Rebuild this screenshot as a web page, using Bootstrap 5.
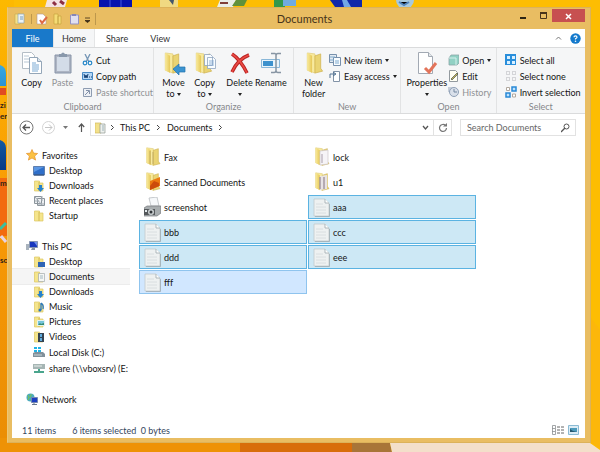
<!DOCTYPE html>
<html lang="en">
<head>
<meta charset="utf-8">
<meta name="viewport" content="width=device-width, initial-scale=1">
<title>Documents</title>
<link href="https://cdn.jsdelivr.net/npm/bootstrap@5.3.0/dist/css/bootstrap.min.css" rel="stylesheet">
<style>
body{font-family:Lato,"Open Sans",sans-serif;font-size:9px;line-height:11px;color:#141414;background:#fbb900;padding:7px 9px 9px 7px}
button{font:inherit;color:inherit;background:none;border:0;padding:0;white-space:nowrap}
svg{display:block;flex:none}
.wallpaper{position:absolute;left:0;top:0;width:100%;height:100%;z-index:-1}
.win{background:#e9bd62;border:1px solid #dcb25a;border-left-color:#edc777;padding:0 5px 4px 4px}
.titlebar{height:21px}
.titlebar h1{font-size:11px;line-height:20px;color:#46331a;font-weight:400}
.quick{width:180px;padding-left:2px}
.controls{width:168px}
.controls button{height:13px;width:20px;margin-bottom:7px}
.controls .closer{background:#c75050;width:33px}
.tabs button{height:18px;padding:0 11px;color:#333}
.tabs .file-tab{background:#1979ca;color:#fff;width:41px;padding:0}
.tabs .active{background:#f5f6f7;border:1px solid #e4e5e6;border-width:0 1px;padding:0;width:42px}
.ribbon{background:#f5f6f7;border:1px solid #dadbdc;border-width:1px 0;height:67px}
.group{border-right:1px solid #e2e3e4;padding-top:4px;min-width:0}
.group:last-child{border-right:0}
.group h2{font-size:9px;line-height:12px;color:#85878b;font-weight:400;text-align:center}
.g1{flex:142 1 0}.g2{flex:140 1 0}.g3{flex:107 1 0}.g4{flex:95 1 0}.g5{flex:89 1 0}
.big{width:31px;line-height:11px}
.big svg{margin:0 auto 1px}
.big.wide{width:43px}
.small-cmds button{height:16px;gap:3px}
.off{color:#8f9194}
.caret{display:inline-block;border:solid transparent;border-width:3px 2px 0;border-top-color:#222;vertical-align:middle}
.crumbs{border:1px solid #e2e2e2;height:17px}
.address{height:27px;padding:0 9px 0 7px}
.up-btn{padding:0 5px 0 10px}
.refresh{border-left:1px solid #e2e2e2;width:18px;height:15px}
.finder{border:1px solid #e2e2e2;width:116px;height:17px}
.finder input{font:inherit;color:#555;border:0;background:none;width:98px;padding:0 0 0 6px;outline:0}
.finder input::placeholder{color:#666;opacity:1}
.tree{width:118px;padding-top:6px;overflow:hidden}
.tree li{height:15px;padding-left:21px;gap:4px;white-space:nowrap}
.tree li.root{height:16px;padding-left:14px}
.tree li.drive{height:16px}
.tree li.current{background:#f5f5f5;box-shadow:0 0 0 1px #ececec}
.tree ul+ul{margin-top:15px}
.files{display:grid;grid-template-columns:168px 168px;grid-auto-rows:24px;gap:1px;padding:4px 0 0 9px}
.files button{border:1px solid transparent;gap:3px;padding-left:4px;text-align:left}
.files .sel{background:#cde8f5;border-color:#5bb3e2}
.files .focus{background:#d1e7ff;border-color:#8fc4ee}
.status{height:16px;padding:0 6px 0 10px;color:#35465c}
</style>
</head>
<body class="min-vh-100 d-flex flex-column">
<svg width="0" height="0" class="position-absolute" aria-hidden="true">
<defs>
<linearGradient id="gold" x1="0" x2="1"><stop offset="0" stop-color="#f9ea9c"/><stop offset="1" stop-color="#e6c858"/></linearGradient>
<linearGradient id="sea" x1="0" y1="0" x2="0" y2="1"><stop offset="0" stop-color="#35a8e5"/><stop offset="1" stop-color="#073a86"/></linearGradient>
<linearGradient id="wall" x1="0" y1="0" x2="0" y2="1"><stop offset="0" stop-color="#fdb900"/><stop offset=".45" stop-color="#f99a05"/><stop offset="1" stop-color="#ea8d05"/></linearGradient>
</defs>
<symbol id="folder" viewBox="0 0 20 24"><path d="M3 1l8 1v20l-8-3z" fill="#f8ea9e" stroke="#dfca72" stroke-width=".7"/><path d="M11 4l6-2v15l2 3-8 2z" fill="#ead473" stroke="#ccae4b" stroke-width=".7"/><path d="M3 1l5 3v18l-5-3z" fill="url(#gold)"/></symbol>
<symbol id="mini" viewBox="0 0 12 12"><path d="M1.500 1h5v2h3.500v8h-8.500z" fill="#f5e58c" stroke="#dcc662" stroke-width=".7"/><path d="M6 2v9" stroke="#d3bb55"/></symbol>
<symbol id="page" viewBox="0 0 17 19"><path d="M1 1h11l4 4v13h-15z" fill="#eef1f1" stroke="#c2cacd" stroke-width=".8"/><path d="M12 1v4h4" fill="#fff" stroke="#9da8ad" stroke-width=".8"/><path d="M3 6h7M3 9h10M3 12h10M3 15h10" stroke="#d3dadd" stroke-width=".8"/><path d="M2 18.500h14.500V6" fill="none" stroke="#9aa5aa" stroke-width=".7"/></symbol>
<symbol id="screen" viewBox="0 0 12 10"><path d="M.5.5h11v8.500H.5z" fill="#2f6fc9" stroke="#5f7fae"/><path d="M1 1h10L1 6z" fill="#5b97e4"/><path d="M1 9h10" stroke="#27446f"/></symbol>
</svg>

<svg class="wallpaper" viewBox="0 0 600 452" preserveAspectRatio="none" aria-hidden="true">
<path fill="#fdbd02" d="M0 0h600v452H0z"/>
<path fill="url(#wall)" d="M0 0h14v452H0z"/>
<path fill="#ee9206" d="M0 438h300v14H0z"/><path fill="#d86d0a" d="M240 443h112v9H240z"/><path fill="#a87538" d="M352 443h38l2 9h-40z"/><path fill="#f3dfca" d="M390 443h200l10 7v2H392z"/>
<path fill="#fba81e" d="M585 438l15 11V330l-15-20z" opacity=".3"/>
<path fill="#f4e3e2" d="M47 0h20l-2 7H45z"/><path stroke="#8d3043" stroke-width="3" d="M53 2l3 3M60 1l4 3"/>
<path fill="#0712ae" d="M99 0h33v7H99z"/><path stroke="#4256df" d="M110 0v7M121 0v7"/>
<path fill="#f0d982" d="M160 0h18v7h-18z"/><path fill="#44566b" d="M169 0h5l-1 5z"/>
<path fill="#e9eee8" d="M220 0h16l-3 7h-16z"/><path fill="#60913b" d="M236 0h11l-3 6h-12z"/><path stroke="#803f38" stroke-width="2" d="M220 3h8"/>
<path fill="#34984b" d="M274 0h11v7h-11z"/><path fill="#71abe0" d="M283 0h13v6h-13z"/>
<path fill="#1028a9" d="M330 0h32v7h-27z"/><path fill="#73a8e7" d="M342 0h5l4 7h-7z"/>
<circle cx="405" cy="0" r="9" fill="#a7c9de"/><path stroke="#5085bd" stroke-width="2" d="M399 2l5 3 5-3"/>
<path fill="url(#sea)" d="M0 65q6 2 6 8v13H0zM0 140q6 2 6 8v22H0z"/><path fill="#e14b21" d="M0 88h6v7H0z"/><path fill="#f26a0e" d="M0 178h7v58H0z"/>
<path stroke="#38c1a1" stroke-width="3" d="M0 229l6-6"/><path stroke="#e8d3e4" stroke-width="3" d="M1 236l5 6"/>
<g font-size="8" font-weight="700" fill="#302116"><text x="0" y="108">zi</text><text x="0" y="119">er</text><text x="0" y="186">m</text><text x="0" y="263">so</text></g>
</svg>

<main class="win flex-grow-1 d-flex flex-column">
<header class="titlebar d-flex align-items-center justify-content-between">
<div class="quick d-flex align-items-center">
<svg width="68" height="14" viewBox="0 0 68 14"><path d="M1 2h5v10H1z" fill="#f4e28b" stroke="#c9ae55" stroke-width=".7"/><path d="M4 2h6v9H4z" fill="#edf3f5" stroke="#8ea4b3" stroke-width=".7"/><path d="M6 5h3M6 7h3" stroke="#5788b2" stroke-width=".8"/><path d="M17.500 2v10" stroke="#bd984c"/><path d="M23 2h6l3 3v7h-9z" fill="#fff" stroke="#b4998e" stroke-width=".6"/><path d="M26 8l2 3 5-6" fill="none" stroke="#dd6a46" stroke-width="2"/><path d="M40 2h4v2h3v8h-7z" fill="#f5dc75" stroke="#c8a441" stroke-width=".7"/><path d="M44 4v8" stroke="#b89838"/><path d="M56.500 3h8v9h-8z" fill="#e1e0f0" stroke="#9491c1"/><path d="M58 2h4v2h-4z" fill="#8686b5"/></svg>
<svg width="18" height="14" viewBox="0 0 18 14"><path d="M3 6h5M3 8.500h5l-2.500 2z" stroke="#382a15" fill="#382a15" stroke-width=".8"/><path d="M13.500 1v12" stroke="#bd984c"/></svg>
</div>
<h1 class="m-0">Documents</h1>
<div class="controls d-flex justify-content-end">
<button aria-label="Minimize"><svg width="20" height="13"><path d="M8 9h6" stroke="#2d2515" stroke-width="2"/></svg></button>
<button aria-label="Maximize"><svg width="20" height="13"><path d="M8.500 4.500h6v5h-6z" fill="none" stroke="#4a351a"/><path d="M8 4h7" stroke="#4a351a" stroke-width="2"/></svg></button>
<button class="closer" aria-label="Close"><svg width="33" height="13"><path d="M14 5l5 5m0-5l-5 5" stroke="#fff" stroke-width="1.500"/></svg></button>
</div>
</header>

<div class="bg-white flex-grow-1 d-flex flex-column">
<nav class="tabs d-flex align-items-center" aria-label="Ribbon tabs">
<button class="file-tab">File</button><button class="active">Home</button><button>Share</button><button>View</button>
<button class="ms-auto p-0 me-2" aria-label="Collapse ribbon"><svg width="7" height="6"><path d="M1 4.500L3.500 2 6 4.500" fill="none" stroke="#777"/></svg></button>
<button class="p-0 me-1" aria-label="Help"><svg width="11" height="11" viewBox="0 0 11 11"><circle cx="5.500" cy="5.500" r="5.200" fill="#1379cc"/><path d="M4 4.200Q4 2.800 5.500 2.800T7 4.200Q7 5 5.500 5.800V6.500" fill="none" stroke="#fff" stroke-width="1.200"/><circle cx="5.500" cy="8.300" r=".8" fill="#fff"/></svg></button>
</nav>

<section class="ribbon d-flex" aria-label="Home commands">
<div class="group g1 d-flex flex-column justify-content-between"><div class="d-flex">
<button class="big ms-1 align-self-start"><svg width="24" height="24"><path d="M2.500.5h9l3 3v13h-12z" fill="#fff" stroke="#b5bec6"/><path d="M4 4h5M4 7h6M4 10h6" stroke="#b8c7d4"/><path d="M9.500 5.500h8l4 4v12h-12z" fill="#fff" stroke="#94a6b8"/><path d="M17.500 5.500v4h4" fill="#d9e5ef" stroke="#94a6b8"/><path d="M12 11h4M12 13h7M12 15h7M12 17h7M12 19h6" stroke="#5894c9" stroke-width=".8"/></svg>Copy</button>
<button class="big off align-self-start"><svg width="24" height="24"><path d="M4 3h16v18H4z" fill="#aeb5c3" stroke="#8894a8"/><path d="M6 5h12v14H6z" fill="#d3dce8"/><path d="M8 5V2h2q2-3 4 0h2v3z" fill="#8998ab"/></svg>Paste</button>
<div class="small-cmds d-flex flex-column ms-1">
<button class="d-flex align-items-center"><svg width="11" height="12"><path d="M3 0l4 8M8 0L4 8" stroke="#7495b5" stroke-width="1.300"/><circle cx="3" cy="9" r="1.800" fill="none" stroke="#2587c8" stroke-width="1.200"/><circle cx="8" cy="9" r="1.800" fill="none" stroke="#2587c8" stroke-width="1.200"/></svg>Cut</button>
<button class="d-flex align-items-center"><svg width="11" height="10"><path d="M.5 1.500h10v7H.5z" fill="#b4d6f5" stroke="#4689c5"/><path d="M2 3l1 4 1-3 1 3 1-4M7 6h1M9 6h1" fill="none" stroke="#153f73"/></svg>Copy path</button>
<button class="d-flex align-items-center off"><svg width="11" height="11"><path d="M1.500 1.500h8v8h-8z" fill="#edf0f5" stroke="#8e9cb1"/><path d="M3 8l4-4M4 3.500h3.500V7" fill="none" stroke="#8392a9"/></svg>Paste shortcut</button>
</div></div><h2 class="m-0">Clipboard</h2></div>

<div class="group g2 d-flex flex-column justify-content-between"><div class="d-flex">
<button class="big ms-1 align-self-start"><svg width="24" height="24"><use href="#folder" width="20" height="23"/><path d="M11 17l6-5v3h6v5h-6v3z" fill="#3b94d1" stroke="#2473ad" stroke-width=".7"/></svg>Move<br>to <i class="caret"></i></button>
<button class="big align-self-start"><svg width="24" height="24"><use href="#folder" width="20" height="23"/><path d="M11.500 2.500h6l2 2v9h-8zM14.500 5.500h6l2 2v9h-8z" fill="#f8fcff" stroke="#91a5bf" stroke-width=".8"/><path d="M16 9h5M16 11h5M16 13h5" stroke="#6b98ca" stroke-width=".7"/></svg>Copy<br>to <i class="caret"></i></button>
<button class="big ms-1 align-self-start"><svg width="24" height="24"><path d="M4 2q8 5 15 19M21 3Q10 7 4 20" fill="none" stroke="#b92323" stroke-width="3.500"/><path d="M4 2q8 5 15 19M21 3Q10 7 4 20" fill="none" stroke="#ea4a43" stroke-width="1.500"/></svg>Delete<br><i class="caret"></i></button>
<button class="big align-self-start"><svg width="24" height="24"><path d="M2.500 7.500h18v8h-18z" fill="#e9f4fb" stroke="#89b7d8"/><path d="M4 9h10v5H4z" fill="#3c91cd"/><path d="M12 1.500h4q1 0 1 2v15q0 2-2 2h-3M22 1.500h-3q-2 0-2 2v15q0 2 2 2h3" fill="none" stroke="#8795a3" stroke-width="1.500"/></svg>Rename</button>
</div><h2 class="m-0">Organize</h2></div>

<div class="group g3 d-flex flex-column justify-content-between"><div class="d-flex">
<button class="big ms-1 align-self-start"><svg width="24" height="24"><use href="#folder" x="2" width="20" height="23"/></svg>New<br>folder</button>
<div class="small-cmds">
<button class="d-flex align-items-center"><svg width="12" height="12"><path d="M.5.5h7v8h-7z" fill="#e4ebf2" stroke="#7790ac"/><path d="M4.500 3.500h7v8h-7z" fill="#f8fcff" stroke="#7790ac"/><path d="M1 3h5M1 6h4M6 7h4M6 9h4" stroke="#7faace"/></svg>New item <i class="caret"></i></button>
<button class="d-flex align-items-center"><svg width="12" height="12"><path d="M4.500 1.500h6v10h-6z" fill="#fff" stroke="#8293a7"/><path d="M1 8V4h5M4 2l3 2-3 2" fill="none" stroke="#547493"/></svg>Easy access <i class="caret"></i></button>
</div></div><h2 class="m-0">New</h2></div>

<div class="group g4 d-flex flex-column justify-content-between"><div class="d-flex">
<button class="big wide ms-1 align-self-start"><svg width="24" height="24"><path d="M3.500.5h10l4 4v17h-14z" fill="#fff" stroke="#a2a9b3"/><path d="M13.500.5v4h4" fill="#e5e9ec" stroke="#a2a9b3"/><path d="M10 16l4 4 7-9" fill="none" stroke="#e3745a" stroke-width="3"/></svg>Properties<br><i class="caret"></i></button>
<div class="small-cmds">
<button class="d-flex align-items-center"><svg width="11" height="12"><path d="M3 1h8v8l-2 2H1V4z" fill="#91d1c4" stroke="#8ba6a7" stroke-width=".8"/><path d="M1 4h7v7" fill="none" stroke="#d6f0ed"/></svg>Open <i class="caret"></i></button>
<button class="d-flex align-items-center"><svg width="11" height="12"><path d="M1.500.5h6l2 2v9h-8z" fill="#fffff4" stroke="#939a9f"/><path d="M3 9l6-6 1 1-6 6z" fill="#c8b459" stroke="#44514e" stroke-width=".7"/></svg>Edit</button>
<button class="d-flex align-items-center off"><svg width="11" height="12"><path d="M0 1h5v5H0z" fill="#c6ced9"/><circle cx="6" cy="6" r="4.500" fill="#d9e0ea" stroke="#8fa0b6"/><path d="M6 3v3h3" fill="none" stroke="#73869f"/></svg>History</button>
</div></div><h2 class="m-0">Open</h2></div>

<div class="group g5 d-flex flex-column justify-content-between"><div class="small-cmds ps-2">
<button class="d-flex align-items-center"><svg width="12" height="12"><path d="M0 0h11v11H0z" fill="#298edb"/><path d="M2 2h3v3H2zM7 2h3v3H7zM2 7h3v3H2zM7 7h3v3H7z" fill="#d9f0ff"/></svg>Select all</button>
<button class="d-flex align-items-center"><svg width="12" height="12"><path d="M1.500 1.500h3v3h-3zM7.500 1.500h3v3h-3zM1.500 7.500h3v3h-3zM7.500 7.500h3v3h-3z" fill="none" stroke="#b2b5b9" stroke-dasharray="1 1"/></svg>Select none</button>
<button class="d-flex align-items-center"><svg width="12" height="12"><path d="M1.500 1.500h3v3h-3zM7.500 8h3v3h-3z" fill="#fff" stroke="#b1a89e"/><path d="M7 1h4v4H7zM1 7h4v4H1z" fill="#bee3ff" stroke="#2989d6" stroke-width="1.500"/></svg>Invert selection</button>
</div><h2 class="m-0">Select</h2></div>
</section>

<div class="address d-flex align-items-center">
<button aria-label="Back"><svg width="15" height="15"><circle cx="7.500" cy="7.500" r="6.500" fill="none" stroke="#777"/><path d="M4 7.500h7M7 4.500l-3 3 3 3" fill="none" stroke="#555" stroke-width="1.300"/></svg></button>
<button class="ms-2" aria-label="Forward"><svg width="13" height="15"><circle cx="6.500" cy="7.500" r="6" fill="none" stroke="#d3d3d3"/><path d="M3 7.500h7M7 4.500l3 3-3 3" fill="none" stroke="#c5c5c5"/></svg></button>
<button class="ms-2" aria-label="Recent locations"><svg width="5" height="5"><path d="M0 1h5L2.500 4z" fill="#777"/></svg></button>
<button class="up-btn" aria-label="Up"><svg width="7" height="10"><path d="M3.500 9V1M.8 4l2.700-3 2.700 3" fill="none" stroke="#555" stroke-width="1.200"/></svg></button>
<div class="crumbs d-flex align-items-center flex-grow-1">
<svg width="12" height="12" class="ms-1"><path d="M0 1h6v10H0z" fill="#f3e18a" stroke="#d1b95c" stroke-width=".7"/><path d="M5 2h5v9H5z" fill="#eef1ed" stroke="#909a93" stroke-width=".7"/><path d="M7 4h2M7 6h2M7 8h2" stroke="#7c99a8" stroke-width=".7"/></svg>
<svg width="13" height="7"><path d="M4 1l2.500 2.500L4 6" fill="none" stroke="#444"/></svg><button>This PC</button>
<svg width="17" height="7"><path d="M7 1l2.500 2.500L7 6" fill="none" stroke="#444"/></svg><button>Documents</button>
<svg width="15" height="7"><path d="M7 1l2.500 2.500L7 6" fill="none" stroke="#444"/></svg>
<button class="ms-auto me-1" aria-label="Previous locations"><svg width="7" height="7"><path d="M1 2l2.500 3L6 2" fill="none" stroke="#555" stroke-width="1.300"/></svg></button>
<button class="refresh border-top-0 d-flex align-items-center justify-content-center" aria-label="Refresh"><svg width="10" height="10"><path d="M7.500 2.500A3.500 3.500 0 1 0 8.500 5" fill="none" stroke="#777" stroke-width="1.200"/><path d="M5 3.500h4V0z" fill="#777"/></svg></button>
</div>
<form class="finder d-flex align-items-center justify-content-between ms-2" role="search" onsubmit="return false"><input type="search" placeholder="Search Documents" aria-label="Search Documents"><svg width="10" height="10" class="me-1"><circle cx="5.500" cy="3.500" r="2.500" fill="none" stroke="#555"/><path d="M4 5L0 9" stroke="#555" stroke-width="1.300"/></svg></form>
</div>

<div class="d-flex flex-grow-1">
<nav class="tree" aria-label="Folders">
<ul class="list-unstyled mb-0">
<li class="root d-flex align-items-center"><svg width="12" height="12" viewBox="0 0 12 12"><path d="M6 .5l1.600 3.600 4 .4-3 2.600 1 4L6 9l-3.600 2.100 1-4-3-2.600 4-.4z" fill="#fbc243" stroke="#e4902b" stroke-width=".7"/></svg>Favorites</li>
<li class="d-flex align-items-center"><svg width="12" height="10"><use href="#screen"/></svg>Desktop</li>
<li class="d-flex align-items-center"><svg width="12" height="12"><use href="#mini"/><path d="M6 5h3v3h2l-3.500 4L4 8h2z" fill="#2682cd"/></svg>Downloads</li>
<li class="d-flex align-items-center"><svg width="12" height="12"><path d="M1.500 1.500h7v7h-7zM4.500 3.500h7v7h-7z" fill="#edf0f3" stroke="#8b949b"/><path d="M2 2l7 8M5 9h6M9 1v5M2 6h4" stroke="#a2abb3"/></svg>Recent places</li>
<li class="d-flex align-items-center"><svg width="12" height="12"><use href="#mini"/></svg>Startup</li>
</ul>
<ul class="list-unstyled mb-0">
<li class="root d-flex align-items-center"><svg width="12" height="12"><path d="M0 4h3v6H0z" fill="#a9b3bd"/><path d="M3.500 1.500h8v6h-8z" fill="#1937bd" stroke="#8494b1"/><path d="M8 2h3v4z" fill="#7190ed"/><path d="M6 8h3v2H5" fill="#8792a0"/></svg>This PC</li>
<li class="d-flex align-items-center"><svg width="12" height="12"><use href="#mini"/><path d="M5 6h7v5H5z" fill="#2e64b5"/></svg>Desktop</li>
<li class="current d-flex align-items-center"><svg width="12" height="12"><use href="#mini"/><path d="M5.500 2.500h6v8h-6z" fill="#f5f7f5" stroke="#a5acb0" stroke-width=".7"/><path d="M7 5h3M7 7h3" stroke="#839cae" stroke-width=".7"/></svg>Documents</li>
<li class="d-flex align-items-center"><svg width="12" height="12"><use href="#mini"/><path d="M6 5h3v3h2l-3.500 4L4 8h2z" fill="#2682cd"/></svg>Downloads</li>
<li class="d-flex align-items-center"><svg width="12" height="12"><use href="#mini"/><path d="M8 2v7M8 2q3 2 2 6" fill="none" stroke="#2878c2" stroke-width="1.300"/><circle cx="7" cy="9" r="1.500" fill="#2878c2"/></svg>Music</li>
<li class="d-flex align-items-center"><svg width="12" height="12"><use href="#mini"/><path d="M4.500 4.500h7v5h-7z" fill="#77c5db" stroke="#e4f3f1"/><path d="M5 9l2-2 1 1 3-1v2z" fill="#338b76"/></svg>Pictures</li>
<li class="d-flex align-items-center"><svg width="12" height="12"><use href="#mini"/><path d="M5 2h6v9H5z" fill="#354454"/><path d="M7 3h2v3H7zM7 7h2v3H7z" fill="#5fabdc"/></svg>Videos</li>
<li class="drive d-flex align-items-center"><svg width="12" height="12"><path d="M1 1h3v2H1zM5 1h3v2H5zM1 4h3v2H1zM5 4h3v2H5z" fill="#20b4e7"/><path d="M0 7l2-1h8l2 2v3H0z" fill="#81909a"/><path d="M1 9h8" stroke="#cad5d9"/></svg>Local Disk (C:)</li>
<li class="drive d-flex align-items-center"><svg width="12" height="12"><path d="M0 2h12v5H0z" fill="#a6b5b4"/><path d="M1 4h8" stroke="#e6eeeb"/><path d="M6 7v3M1 10h10" stroke="#4aa58d" stroke-width="2"/></svg>share (\\vboxsrv) (E:</li>
</ul>
<ul class="list-unstyled mb-0">
<li class="root d-flex align-items-center"><svg width="12" height="12"><circle cx="4.500" cy="4.500" r="4" fill="#4caabd"/><path d="M2 2q2 2 0 5M5 1q1 2-2 4" fill="none" stroke="#77c552"/><path d="M5.500 4.500h6v5h-6z" fill="#1c3fc2" stroke="#7588b0"/><path d="M8 10v1M6 11.500h5" stroke="#68788d"/></svg>Network</li>
</ul>
</nav>

<section class="files align-content-start" aria-label="Files">
<button class="d-flex align-items-center"><svg width="17" height="20"><use href="#folder"/><path d="M6 4v13M9 5v12" stroke="#c3ad63"/></svg>Fax</button>
<button class="d-flex align-items-center"><svg width="17" height="20"><use href="#folder"/><path d="M7 4l8-1v14l-8 1z" fill="#f6f4f7" stroke="#cdc5c9" stroke-width=".7"/><path d="M9 7v9" stroke="#a99eab"/></svg>lock</button>
<button class="d-flex align-items-center"><svg width="17" height="20"><use href="#folder"/><path d="M6 9l10-4v9l-10 4z" fill="#ec7911"/><path d="M6 14l4-5 5 2v3l-9 4z" fill="#cc4b0b"/></svg>Scanned Documents</button>
<button class="d-flex align-items-center"><svg width="17" height="20"><use href="#folder"/><path d="M7 4l7-1v14l-7 1z" fill="#e8e3e5"/><path d="M7 5v12M11 5v12" stroke="#9b8e97" stroke-width="1.300"/></svg>u1</button>
<button class="d-flex align-items-center"><svg width="17" height="20"><path d="M5 1l8-1 2 9H7z" fill="#f6f8fa" stroke="#b9bec2" stroke-width=".8"/><path d="M0 11l3-2h14v7l-4 3H0z" fill="#a8adaf" stroke="#75797b" stroke-width=".7"/><path d="M0 12h11v6H0z" fill="#55595c"/><circle cx="7" cy="15" r="3" fill="#cbd0d2"/><circle cx="7" cy="15" r="1.500" fill="#303438"/><path d="M1 13h2v2H1z" fill="#e5ebee"/></svg>screenshot</button>
<button class="sel d-flex align-items-center"><svg width="17" height="19"><use href="#page"/></svg>aaa</button>
<button class="sel d-flex align-items-center"><svg width="17" height="19"><use href="#page"/></svg>bbb</button>
<button class="sel d-flex align-items-center"><svg width="17" height="19"><use href="#page"/></svg>ccc</button>
<button class="sel d-flex align-items-center"><svg width="17" height="19"><use href="#page"/></svg>ddd</button>
<button class="sel d-flex align-items-center"><svg width="17" height="19"><use href="#page"/></svg>eee</button>
<button class="focus d-flex align-items-center"><svg width="17" height="19"><use href="#page"/></svg>fff</button>
</section>
</div>

<footer class="status d-flex align-items-center"><span>11 items</span><span class="ms-3">6 items selected&nbsp; 0 bytes</span>
<button class="ms-auto me-1" aria-label="Details view"><svg width="12" height="10"><path d="M.5.5h3v9h-3zM0 3.500h3M0 6.500h3" fill="none" stroke="#8b8f92" stroke-width=".8"/><path d="M5 2h3M9 2h3M5 5h3M9 5h3M5 8h3M9 8h3" stroke="#666"/></svg></button>
<button aria-label="Large icons view"><svg width="11" height="10"><path d="M.5.5h10v9H.5z" fill="#dcecf5" stroke="#8bbbd4"/><path d="M2 3h7v4H2z" fill="#4d9bbc"/><path d="M2 7V4l3 2 4 1z" fill="#24566d"/></svg></button>
</footer>
</div>
</main>
<script src="https://cdn.jsdelivr.net/npm/bootstrap@5.3.0/dist/js/bootstrap.bundle.min.js"></script>
</body>
</html>
